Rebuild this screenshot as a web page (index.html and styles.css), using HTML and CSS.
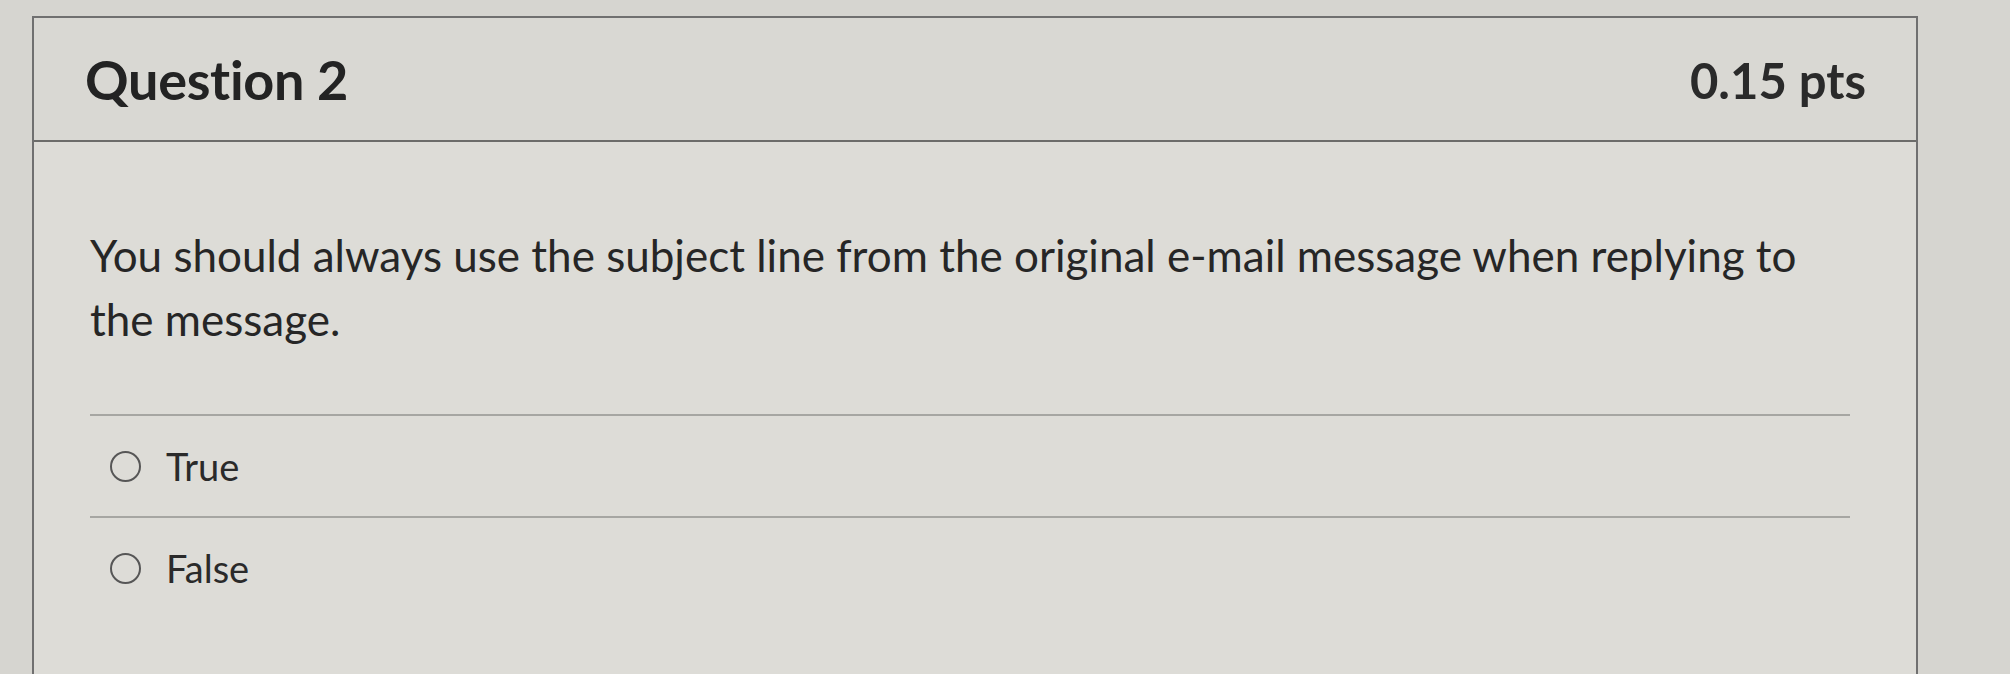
FILE: index.html
```html
<!DOCTYPE html>
<html lang="en">
<head>
<meta charset="utf-8">
<title>Question 2</title>
<link rel="stylesheet" href="styles.css">
</head>
<body>
  <div class="page">
    <section class="question-card">
      <header class="question-header">
        <h2 class="question-name">Question 2</h2>
        <span class="question-points">0.15 pts</span>
      </header>
      <div class="question-body">
        <p class="question-text">You should always use the subject line from the original e-mail message when replying to the message.</p>
        <div class="answers">
          <label class="answer">
            <span class="radio"></span>
            <span class="answer-label">True</span>
          </label>
          <label class="answer">
            <span class="radio"></span>
            <span class="answer-label">False</span>
          </label>
        </div>
      </div>
    </section>
  </div>
</body>
</html>
```

FILE: styles.css
```css
html, body {
  margin: 0;
  padding: 0;
}

body {
  background: #d6d5d0;
  font-family: Lato, "Open Sans", "Liberation Sans", sans-serif;
  color: #2e2e2e;
  overflow: hidden;
}

.page {
  padding: 16px 0 0 32px;
}

.question-card {
  box-sizing: border-box;
  width: 1886px;
  height: 660px;
  border: 2px solid #707070;
  background: #dddcd7;
}

.question-header {
  box-sizing: border-box;
  height: 124px;
  padding: 0 50px 0 51px;
  display: flex;
  justify-content: space-between;
  align-items: center;
  background: #d9d8d3;
  border-bottom: 2px solid #6c6c6a;
}

.question-name {
  margin: 0;
  font-size: 54px;
  font-weight: 700;
  color: #232323;
  letter-spacing: -0.3px;
}

.question-points {
  font-size: 49px;
  font-weight: 700;
  color: #2a2a2a;
  padding-top: 2px;
}

.question-body {
  padding: 81px 66px 0 56px;
}

.question-text {
  margin: 0 0 63px;
  max-width: 1740px;
  font-size: 44px;
  line-height: 64px;
  color: #262626;
}

.answer {
  box-sizing: border-box;
  height: 102px;
  display: flex;
  align-items: center;
  padding-left: 20px;
  border-top: 2px solid #a6a6a2;
}

.radio {
  box-sizing: border-box;
  width: 31px;
  height: 31px;
  border: 2px solid #565656;
  border-radius: 50%;
  margin-right: 25px;
  flex: none;
}

.answer-label {
  font-size: 38px;
  color: #2a2a2a;
}
```
